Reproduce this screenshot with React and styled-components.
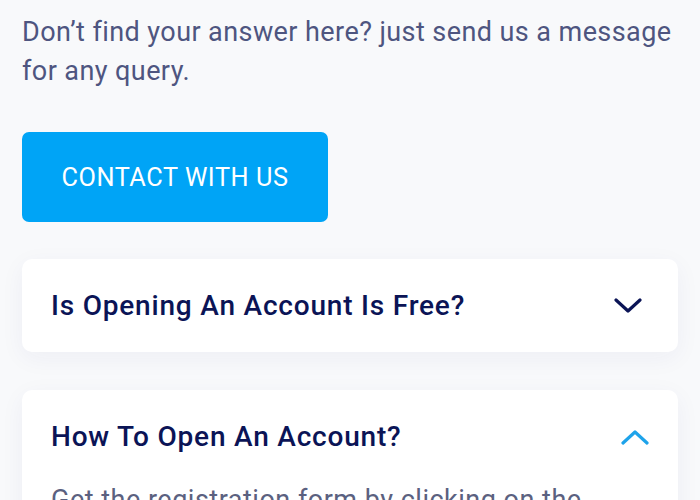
import React from "react";
import styled, { createGlobalStyle } from "styled-components";

const Global = createGlobalStyle`
  html, body { margin: 0; padding: 0; background: #f8f9fb; overflow: hidden; }
  body { font-family: Roboto, "Noto Sans", Arial, sans-serif; }
  * { box-sizing: border-box; }
`;

const Page = styled.div`
  padding: 13px 22px 0 22px;
  display: flex;
  flex-direction: column;
  align-items: flex-start;
`;

const Intro = styled.p`
  margin: 0;
  font-size: 27px;
  line-height: 39px;
  letter-spacing: 0.42px;
  color: #4e5580;
  font-weight: 400;
`;

const ContactButton = styled.button`
  margin-top: 41px;
  width: 306px;
  height: 90px;
  flex-shrink: 0;
  border: none;
  border-radius: 7px;
  background: #00a4f6;
  color: #fff;
  font-family: Roboto, Arial, sans-serif;
  font-size: 25.3px;
  font-weight: 400;
  letter-spacing: 0.55px;
  text-transform: uppercase;
  display: flex;
  align-items: center;
  justify-content: center;
  padding: 0;
`;

const List = styled.div`
  margin-top: 37px;
  align-self: stretch;
  display: flex;
  flex-direction: column;
  gap: 38px;
`;

const Card = styled.div`
  background: #fff;
  border-radius: 10px;
  box-shadow: 0 6px 24px rgba(30, 45, 110, 0.05);
  padding: 0 29px;
`;

const Header = styled.div`
  height: 93px;
  display: flex;
  align-items: center;
  justify-content: space-between;
`;

const Question = styled.h3`
  margin: 0;
  font-size: 28px;
  font-weight: 500;
  color: #0b1456;
  letter-spacing: 0.8px;
`;

const Chevron = styled.svg`
  width: 28px;
  height: 16px;
  margin-right: ${(p) => p.$offset}px;
  flex-shrink: 0;
  color: ${(p) => (p.$open ? "#1ea3ea" : "#0b1456")};
`;

const Answer = styled.p`
  margin: 0;
  font-size: 27px;
  line-height: 34px;
  letter-spacing: 0.5px;
  color: #5b6180;
`;

function Arrow({ open }) {
  return (
    <Chevron viewBox="0 0 28 16" $open={open} $offset={open ? 0 : 7}>
      <polyline
        points={open ? "2,14 14,3 26,14" : "2,2 14,13 26,2"}
        fill="none"
        stroke="currentColor"
        strokeWidth="3.2"
        strokeLinecap="round"
        strokeLinejoin="round"
      />
    </Chevron>
  );
}

const faqs = [
  { q: "Is Opening An Account Is Free?", open: false },
  {
    q: "How To Open An Account?",
    open: true,
    a: "Get the registration form by clicking on the button below and fill it with your details.",
  },
];

export default function App() {
  return (
    <>
      <Global />
      <Page>
        <Intro>
          Don’t find your answer here? just send us a message for any query.
        </Intro>
        <ContactButton>Contact With Us</ContactButton>
        <List>
          {faqs.map((f) => (
            <Card key={f.q}>
              <Header>
                <Question>{f.q}</Question>
                <Arrow open={f.open} />
              </Header>
              {f.open && <Answer>{f.a}</Answer>}
            </Card>
          ))}
        </List>
      </Page>
    </>
  );
}
